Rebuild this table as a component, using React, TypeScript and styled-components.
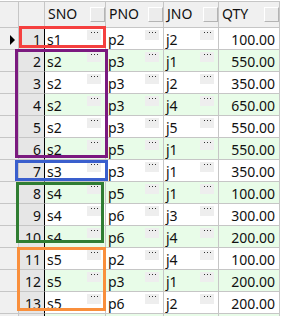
import styled, { createGlobalStyle } from 'styled-components';

interface RowType {
  no: number;
  sno: string;
  pno: string;
  jno: string;
  qty: string;
}

const rows: RowType[] = [
  { no: 1, sno: 's1', pno: 'p2', jno: 'j2', qty: '100.00' },
  { no: 2, sno: 's2', pno: 'p3', jno: 'j1', qty: '550.00' },
  { no: 3, sno: 's2', pno: 'p3', jno: 'j2', qty: '350.00' },
  { no: 4, sno: 's2', pno: 'p3', jno: 'j4', qty: '650.00' },
  { no: 5, sno: 's2', pno: 'p3', jno: 'j5', qty: '550.00' },
  { no: 6, sno: 's2', pno: 'p5', jno: 'j1', qty: '550.00' },
  { no: 7, sno: 's3', pno: 'p3', jno: 'j1', qty: '350.00' },
  { no: 8, sno: 's4', pno: 'p5', jno: 'j1', qty: '100.00' },
  { no: 9, sno: 's4', pno: 'p6', jno: 'j3', qty: '300.00' },
  { no: 10, sno: 's4', pno: 'p6', jno: 'j4', qty: '200.00' },
  { no: 11, sno: 's5', pno: 'p2', jno: 'j4', qty: '100.00' },
  { no: 12, sno: 's5', pno: 'p3', jno: 'j1', qty: '200.00' },
  { no: 13, sno: 's5', pno: 'p6', jno: 'j2', qty: '200.00' },
];

// annotation boxes drawn over the grid
const marks = [
  { color: '#f5403f', left: 19, top: 26, width: 87, height: 22 },
  { color: '#7b1a7f', left: 15, top: 49, width: 93, height: 109 },
  { color: '#3a5fcd', left: 15, top: 160, width: 93, height: 21 },
  { color: '#2f7d32', left: 16, top: 182, width: 88, height: 61 },
  { color: '#f98f3c', left: 17, top: 247, width: 89, height: 64 },
];

function EllipsisButton() {
  return (
    <Dots>
      <svg width="14" height="10" viewBox="0 0 14 10">
        <rect x="4" y="2" width="1" height="1" fill="#333" />
        <rect x="7" y="2" width="1" height="1" fill="#333" />
        <rect x="10" y="2" width="1" height="1" fill="#333" />
      </svg>
    </Dots>
  );
}

function App() {
  return (
    <>
      <GlobalStyle />
      <GridWrapper>
        <Grid>
          <HeadCell />
          <HeadCell />
          <HeadCell>
            SNO
            <HeadButton />
          </HeadCell>
          <HeadCell>
            PNO
            <HeadButton />
          </HeadCell>
          <HeadCell>
            JNO
            <HeadButton />
          </HeadCell>
          <HeadCell>
            QTY
            <HeadButton />
          </HeadCell>

          {rows.map((row) => {
            const even = row.no % 2 === 0;
            return (
              <Row key={row.no}>
                <Indicator>{row.no === 1 && <Arrow />}</Indicator>
                <RowNo>{row.no}</RowNo>
                <Cell $even={even}>
                  {row.sno}
                  <EllipsisButton />
                </Cell>
                <Cell $even={even}>
                  {row.pno}
                  <EllipsisButton />
                </Cell>
                <Cell $even={even}>
                  {row.jno}
                  <EllipsisButton />
                </Cell>
                <Cell $even={even} $right>
                  {row.qty}
                </Cell>
              </Row>
            );
          })}
          <Row>
            <Indicator />
            <RowNo />
            <Cell $even />
            <Cell $even />
            <Cell $even />
            <Cell $even />
          </Row>
        </Grid>
        {marks.map((m) => (
          <Mark
            key={m.top}
            $color={m.color}
            style={{ left: m.left, top: m.top, width: m.width, height: m.height }}
          />
        ))}
      </GridWrapper>
    </>
  );
}

const GlobalStyle = createGlobalStyle`
  html, body {
    margin: 0;
    padding: 0;
    background: #ffffff;
    overflow: hidden;
  }
  body {
    font-family: 'Noto Sans', 'Open Sans', sans-serif;
    font-size: 14px;
    color: #111111;
  }
`;

const GridWrapper = styled.div`
  position: relative;
  padding-top: 1px;
  width: 291px;
  height: 316px;
  overflow: hidden;
`;

const Grid = styled.div`
  display: grid;
  grid-template-columns: 19px 26px 61px 58px 55px 61px;
  grid-template-rows: 26px;
  grid-auto-rows: 22px;
  width: 280px;
  border-top: 1px solid #c6c6c6;
`;

const Row = styled.div`
  display: contents;
`;

const HeadCell = styled.div`
  position: relative;
  box-sizing: border-box;
  background: #f0f0f0;
  border-right: 1px solid #c6c6c6;
  border-bottom: 1px solid #c6c6c6;
  padding: 2px 0 0 3px;
  line-height: 20px;
  white-space: nowrap;
`;

const HeadButton = styled.span`
  position: absolute;
  right: 0;
  top: 5px;
  width: 15px;
  height: 15px;
  box-sizing: border-box;
  background: #ececec;
  border-top: 1px solid #ffffff;
  border-left: 1px solid #ffffff;
  border-bottom: 1px solid #b4b4b4;
  border-right: 1px solid #b4b4b4;
`;

const Indicator = styled.div`
  display: flex;
  align-items: center;
  box-sizing: border-box;
  padding-left: 10px;
  background: #f0f0f0;
  border-right: 1px solid #c6c6c6;
  border-bottom: 1px solid #c6c6c6;
`;

const Arrow = styled.span`
  width: 0;
  height: 0;
  margin-top: 2px;
  border-top: 5px solid transparent;
  border-bottom: 5px solid transparent;
  border-left: 5px solid #000000;
`;

const RowNo = styled.div`
  box-sizing: border-box;
  background: #e6e6e6;
  border-right: 1px solid #000000;
  border-bottom: 1px solid #c6c6c6;
  padding: 2px 3px 0 0;
  line-height: 19px;
  text-align: right;
`;

const Cell = styled.div<{ $even?: boolean; $right?: boolean }>`
  position: relative;
  box-sizing: border-box;
  background: ${({ $even }) => ($even ? '#e8fce8' : '#ffffff')};
  border-right: 1px solid #c6c6c6;
  border-bottom: 1px solid #c6c6c6;
  padding: 2px 4px 0 2px;
  line-height: 19px;
  text-align: ${({ $right }) => ($right ? 'right' : 'left')};
  white-space: nowrap;
`;

const Dots = styled.span`
  position: absolute;
  right: 4px;
  top: 2px;
  width: 14px;
  height: 10px;
  background: #eeeeee;
  line-height: 0;

  svg {
    display: block;
  }
`;

const Mark = styled.div<{ $color: string }>`
  position: absolute;
  box-sizing: border-box;
  border: 3px solid ${({ $color }) => $color};
  pointer-events: none;
`;

export default App;
